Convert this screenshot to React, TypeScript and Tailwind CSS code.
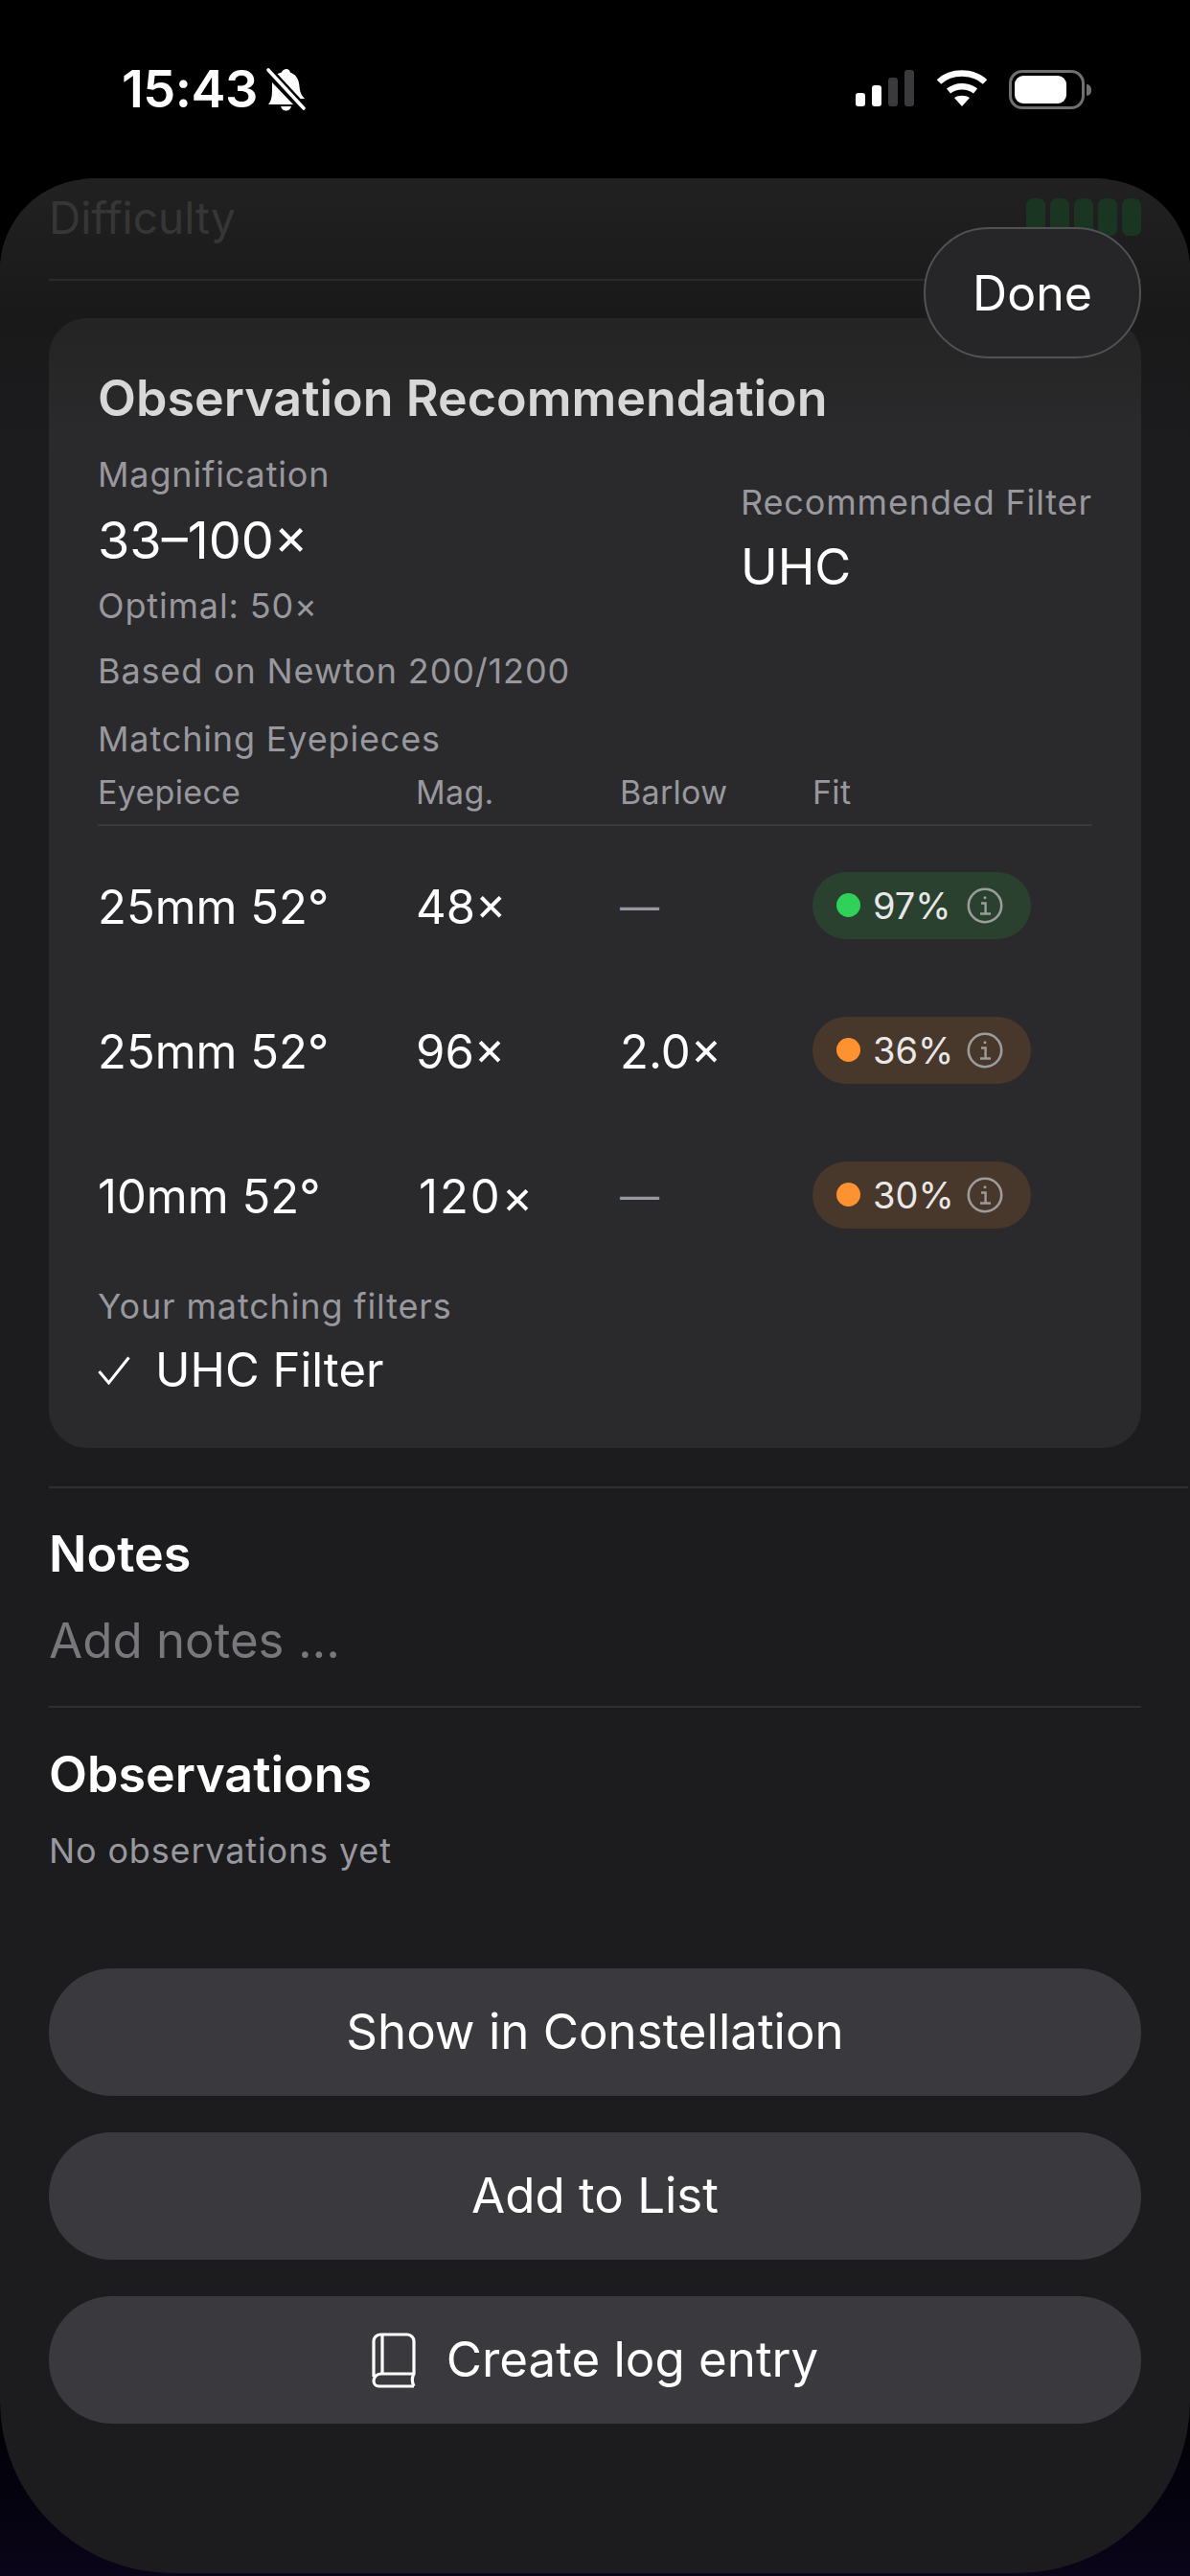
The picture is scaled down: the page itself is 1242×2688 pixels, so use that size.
import React from 'react';

const sans = "font-['Inter','Noto_Sans',sans-serif]";

const eyepieces = [
  { name: '25mm 52°', mag: '48×', barlow: '—', fit: '97%', good: true },
  { name: '25mm 52°', mag: '96×', barlow: '2.0×', fit: '36%', good: false },
  { name: '10mm 52°', mag: '120×', barlow: '—', fit: '30%', good: false },
];

const InfoIcon = () => (
  <svg width="38" height="38" viewBox="0 0 38 38" fill="none" stroke="#9c9c9c" strokeWidth="2.6">
    <circle cx="19" cy="19" r="17.2" />
    <path d="M15 16.5h4.6v11M14 27.5h11" strokeWidth="2.4" />
    <circle cx="19" cy="10.8" r="1.5" fill="#9c9c9c" stroke="none" />
  </svg>
);

const BookIcon = () => (
  <svg width="46" height="58" viewBox="0 0 46 58" fill="none" stroke="white" strokeWidth="3.2" strokeLinejoin="round">
    <path d="M2 46V9a7 7 0 0 1 7-7h28a7 7 0 0 1 7 7v34H9.500A7.500 7.500 0 0 0 2 50.500 5.500 5.500 0 0 0 7.500 56H44" />
    <path d="M11 3v39" />
    <path d="M44 43c-2 3.500-2 9 0 13" />
  </svg>
);

const BellSlash = () => (
  <svg width="44" height="46" viewBox="0 0 44 46">
    <path d="M22 2c2 0 3.500 1.500 3.800 3.500C32 7.500 35 13 35.500 20c.4 6 2 9 5.500 13l-6 0L10 9c2.200-1.800 4.500-3 7-3.500C17.500 3.500 20 2 22 2z" fill="white" />
    <path d="M7 16l22 23H3c3.500-4 4-9 4-17z" fill="white" />
    <path d="M16 41h11c-.8 3-3 4.500-5.500 4.500S17 44 16 41z" fill="white" />
    <path d="M3 2l38 41" stroke="black" strokeWidth="7" />
    <path d="M3 3l37 40" stroke="white" strokeWidth="3.600" strokeLinecap="round" />
  </svg>
);

const StatusBar = () => (
  <div className="h-[187px] flex items-start justify-between pt-[68px] pl-[127px] pr-[103px]">
    <div className="flex items-center gap-[8px] h-[50px]">
      <span className="text-[54px] leading-[50px] font-semibold text-white tracking-[-0.5px]">15:43</span>
      <BellSlash />
    </div>
    <div className="flex items-start gap-[22px] pt-[5px]">
      <svg width="62" height="38" viewBox="0 0 62 38">
        <rect x="0" y="24" width="10" height="14" rx="3" fill="white" />
        <rect x="17" y="16" width="10" height="22" rx="3" fill="white" />
        <rect x="34" y="8" width="10" height="30" rx="3" fill="#3a3a3c" />
        <rect x="51" y="0" width="10" height="38" rx="3" fill="#3a3a3c" />
      </svg>
      <svg width="54" height="38" viewBox="0 0 54 38" fill="none" stroke="white" strokeWidth="6.500">
        <path d="M3 12.500C15.500 .5 38.500 .5 51 12.500" />
        <path d="M13 22c8-6.500 20-6.500 28 0" />
        <path d="M27 38l-8-9c4.500-3 11.500-3 16 0z" fill="white" stroke="none" />
      </svg>
      <div className="flex items-center">
        <div className="w-[79px] h-[41px] rounded-[14px] border-[3px] border-[#707072] p-[3px] pr-[16px]">
          <div className="w-full h-full rounded-[9px] bg-white" />
        </div>
        <div className="w-[5px] h-[12px] ml-[2px] rounded-r-full bg-[#707072]" />
      </div>
    </div>
  </div>
);

const ActionButton = ({ children }: { children: React.ReactNode }) => (
  <button className="w-full h-[133px] rounded-[66px] bg-[#3a3a3e] text-white text-[51px] flex items-center justify-center gap-[32px]">
    {children}
  </button>
);

export default function App() {
  return (
    <div className={`${sans} relative w-[1242px] h-[2688px] overflow-hidden bg-gradient-to-b from-black from-85% to-[#0a0518]`}>
      <StatusBar />

      <div className="relative h-[2498px] rounded-t-[95px] rounded-b-[180px] bg-[#1c1c1e] px-[51px]">
        <div className="absolute -top-px left-[55px] right-[55px] h-[60px] rounded-t-[40px] bg-[#202020]" />
        <div className="absolute top-0 left-0 right-0 h-[290px] rounded-t-[95px] bg-gradient-to-b from-[#212121] via-[#19191a] to-[#1c1c1e]" />

        <div className="relative h-[106px] border-b-2 border-[#2a2a2b] flex items-start justify-between pt-[15px]">
          <span className="text-[46px] leading-[50px] text-[#363637]">Difficulty</span>
          <div className="flex gap-[5px] pt-[5px]">
            {[0, 1, 2, 3, 4].map((i) => (
              <div key={i} className="w-[20px] h-[39px] rounded-[7px] bg-[#1a3522]" />
            ))}
          </div>
        </div>

        <div className="relative mt-[39px] h-[1179px] rounded-[40px] bg-gradient-to-b from-[#242424] to-[#2a2a2c] to-[10%] px-[51px] pt-[54px] pb-[49px]">
          <h2 className="text-[52px] leading-[60px] font-semibold text-[#d8d8d8]">Observation Recommendation</h2>

          <div className="flex justify-between mt-[27px]">
            <div>
              <div className="text-[36px] leading-[44px] tracking-[0.85px] text-[#98989e]">Magnification</div>
              <div className="mt-[17px] text-[54px] leading-[60px] text-white">33–100×</div>
              <div className="mt-[16px] text-[36px] leading-[44px] tracking-[0.85px] text-[#98989e]">Optimal: 50×</div>
            </div>
            <div className="w-[367px] pt-[29px]">
              <div className="text-[36px] leading-[44px] tracking-[0.85px] whitespace-nowrap text-[#98989e]">Recommended Filter</div>
              <div className="mt-[16px] text-[52px] leading-[60px] text-white">UHC</div>
            </div>
          </div>

          <div className="mt-[24px] text-[36px] leading-[44px] tracking-[0.85px] text-[#98989e]">Based on Newton 200/1200</div>
          <div className="mt-[27px] text-[36px] leading-[44px] tracking-[0.85px] text-[#98989e]">Matching Eyepieces</div>

          <div className="mt-[12px] grid grid-cols-[332px_213px_201px_1fr] h-[57px] border-b-2 border-[#3a3a3c] text-[34px] leading-[44px] tracking-[0.3px] text-[#98989e]">
            <span>Eyepiece</span>
            <span>Mag.</span>
            <span>Barlow</span>
            <span>Fit</span>
          </div>

          <div className="pt-[9px]">
            {eyepieces.map((e, i) => (
              <div key={i} className="grid grid-cols-[332px_213px_201px_1fr] h-[151px] items-center text-[49px] text-white">
                <span>{e.name}</span>
                <span className={e.mag === '120×' ? 'pl-[3px] tracking-[2px]' : ''}>{e.mag}</span>
                <span className={e.barlow === '—' ? 'text-[41px] text-[#98989e]' : ''}>{e.barlow}</span>
                <div className={`w-[228px] h-[70px] -mt-[4px] rounded-[35px] flex items-center pl-[25px] gap-[13px] ${e.good ? 'bg-[#2a4130]' : 'bg-[#48372b]'}`}>
                  <div className={`w-[25px] h-[25px] rounded-full ${e.good ? 'bg-[#30d158]' : 'bg-[#ff9230]'}`} />
                  <span className="w-[85px] text-[38px] leading-[40px] text-[#e8e8e8]">{e.fit}</span>
                  <InfoIcon />
                </div>
              </div>
            ))}
          </div>

          <div className="mt-[17px] text-[36px] leading-[44px] tracking-[0.85px] text-[#98989e]">Your matching filters</div>
          <div className="mt-[15px] flex items-center gap-[26px] text-[49px] leading-[60px] text-white">
            <svg width="34" height="30" viewBox="0 0 34 30" fill="none" stroke="white" strokeWidth="3">
              <path d="M1.500 16l10 12L32.500 1.500" />
            </svg>
            <span>UHC Filter</span>
          </div>
        </div>

        <div className="mt-[40px] -mr-[49px] border-t-2 border-[#2f2f31]" />
        <div className="mt-[41px] text-[52px] leading-[56px] font-semibold text-white">Notes</div>
        <div className="mt-[32px] text-[51px] leading-[60px] text-[#77777c]">Add notes ...</div>

        <div className="mt-[38px] border-t-2 border-[#2f2f31]" />
        <div className="mt-[42px] text-[52px] leading-[56px] font-semibold text-white">Observations</div>
        <div className="mt-[29px] text-[36px] leading-[44px] tracking-[0.85px] text-[#98989e]">No observations yet</div>

        <div className="mt-[101px] flex flex-col gap-[38px]">
          <ActionButton>Show in Constellation</ActionButton>
          <ActionButton>Add to List</ActionButton>
          <ActionButton>
            <BookIcon />
            <span>Create log entry</span>
          </ActionButton>
        </div>

        <button className="absolute top-[50px] right-[51px] w-[227px] h-[137px] pt-[2px] rounded-[68px] border-2 border-[#525255] bg-[#262628] text-[50px] text-white">
          Done
        </button>
      </div>
    </div>
  );
}
